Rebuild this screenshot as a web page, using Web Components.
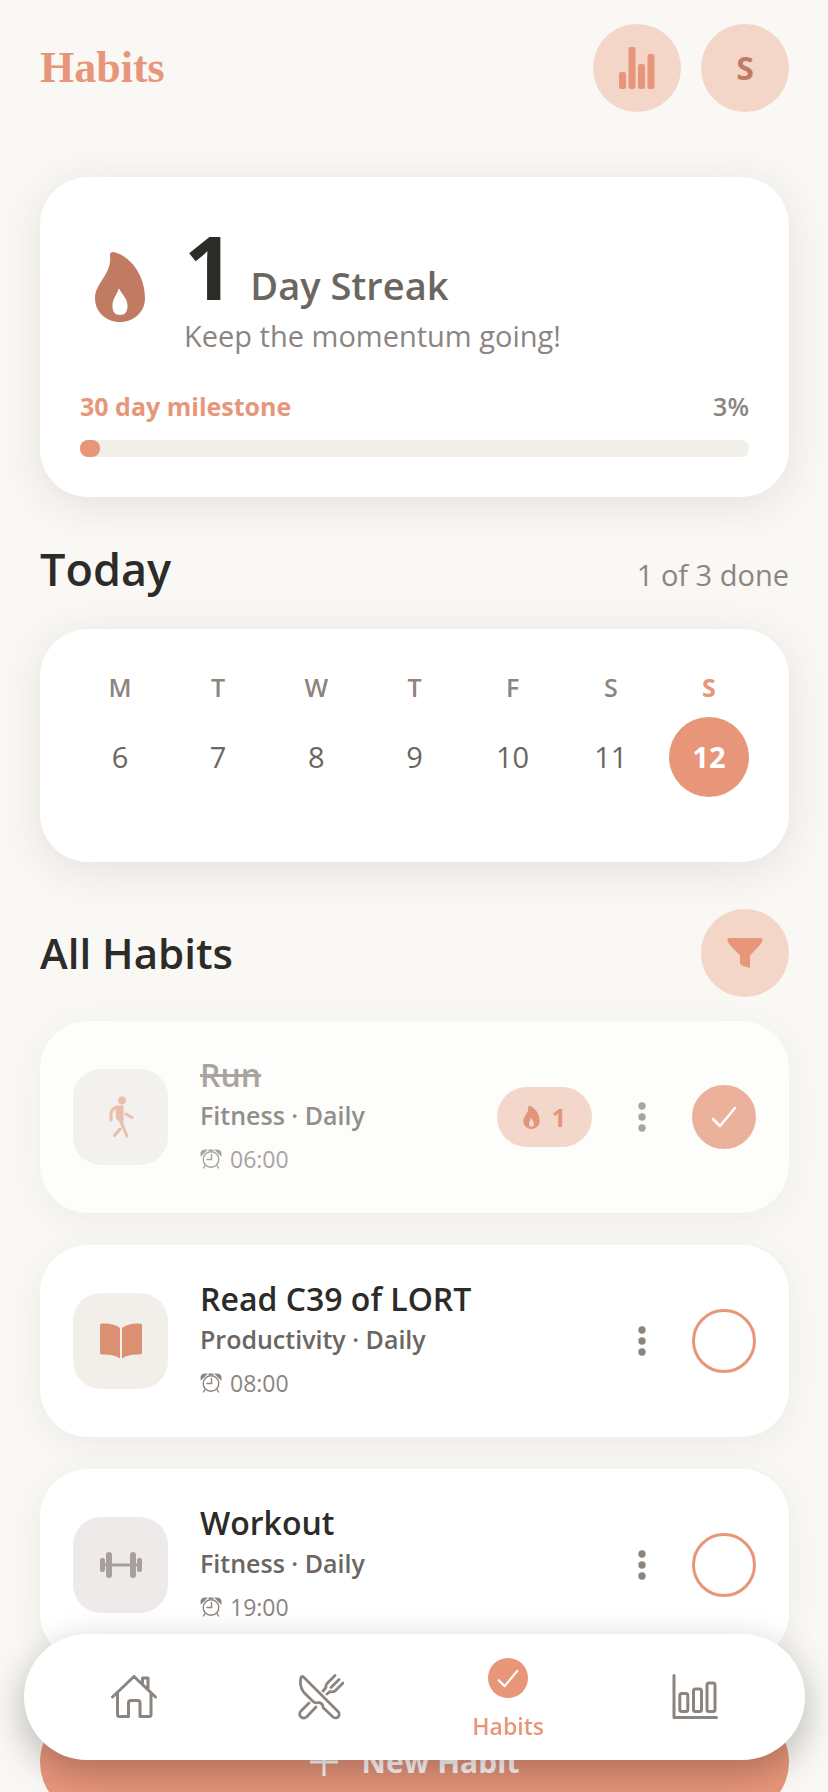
<!DOCTYPE html>
<html lang="en">
<head>
<meta charset="utf-8">
<meta name="viewport" content="width=device-width, initial-scale=1">
<title>Habits</title>
<style>
	:root {
		--bg: #f9f8f4;
		--accent: #e8967a;
		--accent-dark: #c17b62;
		--accent-soft: #f4d6c9;
		--ink: #2c2b27;
		--ink-2: #6b665f;
		--ink-3: #8c857f;
		--track: #f2efeb;
	}

	body {
		margin: 0;
		background: var(--bg);
		color: var(--ink);
		font-family: "Open Sans", "Noto Sans", sans-serif;
	}
</style>
</head>
<body>
<habits-app></habits-app>

<script>
// Inline drawings shared by all components
const ICONS = {
	bars: `<svg width="36" height="42" viewBox="0 0 36 42" fill="currentColor"><rect y="25" width="7" height="17" rx="2"/><rect x="9.5" width="7" height="42" rx="2"/><rect x="19" y="17" width="7" height="25" rx="2"/><rect x="28.5" y="7" width="7" height="35" rx="2"/></svg>`,
	flame: `<svg viewBox="0 0 50 70" fill="currentColor" fill-rule="evenodd"><path d="M18 0C34 3 50 22 50 46C50 60 39 70 25 70C11 70 0 60 0 46C0 31 17 22 15 4Q14.500 0 18 0ZM23.500 37C22 43 17.500 46 17.500 54C17.500 60 20 63 25 63C30 63 32.500 60 32.500 54C32.500 46 27 43 24.500 37Z"/></svg>`,
	filter: `<svg width="36" height="32" viewBox="0 0 36 32" fill="currentColor"><path d="M2 1H34Q36 1 35.500 3.500Q35 6 32 9L23 18.500V31L18 29.500Q13 28 13 26V18.500L4 9Q1 6 .5 3.500Q0 1 2 1Z"/></svg>`,
	walk: `<svg width="26" height="42" viewBox="0 0 26 42" fill="currentColor" stroke="currentColor" stroke-width="3" stroke-linecap="round" stroke-linejoin="round"><circle cx="14" cy="4.500" r="4" stroke="none"/><path d="M9 11H14V26L9.500 22Z"/><path d="M9 11Q3 13 3 18V24M18 18L24 21.500M13 26L19 40M12 33L6.500 39.500" fill="none"/></svg>`,
	book: `<svg width="42" height="36" viewBox="0 0 42 36" fill="currentColor"><path d="M2 .5Q14 0 20 5V35.500Q14 31 2 31.500Q0 31.500 0 29.500V2.500Q0 .5 2 .5ZM40 .5Q28 0 22 5V35.500Q28 31 40 31.500Q42 31.500 42 29.500V2.500Q42 .5 40 .5Z"/></svg>`,
	dumbbell: `<svg width="42" height="26" viewBox="0 0 42 26" fill="currentColor"><rect y="6" width="5" height="14" rx="2"/><rect x="6" width="6" height="26" rx="3"/><rect x="4" y="11.500" width="34" height="3"/><rect x="30" width="6" height="26" rx="3"/><rect x="37" y="6" width="5" height="14" rx="2"/></svg>`,
	clock: `<svg width="22" height="20" viewBox="0 0 22 20" fill="none" stroke="currentColor" stroke-width="1.400" stroke-linecap="round"><circle cx="11" cy="10.500" r="7.800"/><path d="M11.500 5.500V10.500H7M5 16.500L3.500 19M17 16.500L18.500 19M9 1.300H13"/><path d="M1.500 5.500Q1 1.500 5.500 1.500ZM20.500 5.500Q21 1.500 16.500 1.500Z" stroke-width="2"/></svg>`,
	dots: `<svg width="8" height="30" viewBox="0 0 8 30" fill="currentColor"><circle cx="4" cy="4" r="3.700"/><circle cx="4" cy="15" r="3.700"/><circle cx="4" cy="26" r="3.700"/></svg>`,
	check: `<svg width="26" height="22" viewBox="0 0 26 22" fill="none" stroke="currentColor" stroke-width="2.600" stroke-linecap="round" stroke-linejoin="round"><path d="M2 13L9 20L24 2"/></svg>`,
	plus: `<svg width="28" height="28" viewBox="0 0 28 28" fill="none" stroke="currentColor" stroke-width="3"><path d="M14 0V28M0 14H28"/></svg>`,
	home: `<svg width="46" height="44" viewBox="0 0 46 44" fill="none" stroke="currentColor" stroke-width="3" stroke-linecap="round" stroke-linejoin="round"><path d="M1.500 22L23 1.500L44.500 22M6.500 18.500V39.500Q6.500 41.500 8.500 41.500H17.500V28Q17.500 25.500 20 25.500H26.500Q29 25.500 29 28V41.500H38Q40 41.500 40 39.500V18.500M31.500 8.500V3H37V14"/></svg>`,
	meals: `<svg width="46" height="46" viewBox="0 0 46 46" fill="none" stroke="currentColor" stroke-width="2.800" stroke-linecap="round" stroke-linejoin="round"><path d="M3 3.500Q4 1.500 6 3.500L40 37.500A3.600 3.600 0 0 1 35 43L25 33.500Q25 29 20.500 28.500Q17 29.500 14.500 27L6 18.500Q1 12 3 3.500Z"/><path d="M11 29L3 37A4 4 0 0 0 8.500 43L18 33M37 1.500L29 9.500Q27.500 11.500 28 13.500L25 17M45 9L37 17Q34.500 18.500 32 17.500L29 20M41 5.500L33 13.500"/></svg>`,
	stats: `<svg width="46" height="46" viewBox="0 0 46 46" fill="none" stroke="currentColor" stroke-width="3" stroke-linecap="round" stroke-linejoin="round"><path d="M2 1.500V43.500H44.500"/><rect x="7.800" y="19.500" width="8" height="18" rx="2"/><rect x="21.500" y="15" width="8" height="22.500" rx="2"/><rect x="35" y="9" width="8" height="28.500" rx="2"/></svg>`
};

// Small helper: attach an open root and fill it
function render(host, css, html) {
	const root = host.attachShadow({ mode: 'open' });
	root.innerHTML = `<style>* { box-sizing: border-box; margin: 0; } svg { display: block; flex: none; } ${css}</style>${html}`;
	return root;
}

// Round button, content goes in the slot or comes from the icon attribute
class RoundButton extends HTMLElement {
	connectedCallback() {
		const icon = this.getAttribute('icon');
		render(this, `
			:host { display: block; }
			button {
				display: grid;
				place-items: center;
				width: 88px;
				height: 88px;
				padding: 0;
				border: 0;
				border-radius: 50%;
				background: var(--accent-soft);
				color: var(--button-color, var(--accent));
				font: 700 32px/40px "Open Sans", "Noto Sans", sans-serif;
			}
		`, `<button type="button" aria-label="${this.getAttribute('label')}">${icon ? ICONS[icon] : '<slot></slot>'}</button>`);
	}
}
customElements.define('round-button', RoundButton);

// White rounded surface
class SurfaceCard extends HTMLElement {
	connectedCallback() {
		render(this, `
			:host {
				display: block;
				border-radius: 48px;
				background: #fff;
				box-shadow: 0 8px 40px rgba(110, 70, 80, 0.13);
			}
		`, `<slot></slot>`);
	}
}
customElements.define('surface-card', SurfaceCard);

class StreakCard extends HTMLElement {
	connectedCallback() {
		const percent = this.getAttribute('percent');
		render(this, `
			:host { display: block; }
			.body { padding: 40px; }
			.top { display: flex; align-items: center; gap: 24px; }
			.flame { display: grid; place-items: center; width: 80px; color: var(--accent-dark); }
			.flame svg { width: 50px; height: 70px; }
			.count { display: flex; align-items: baseline; gap: 16px; line-height: 98px; }
			.count strong { font-size: 88px; font-weight: 700; }
			.count span { font-size: 38px; line-height: 48px; font-weight: 600; color: var(--ink-2); }
			.note { font-size: 29px; line-height: 42px; color: var(--ink-3); }
			.goal {
				display: flex;
				justify-content: space-between;
				margin: 32px 0 17px;
				font-size: 25px;
				line-height: 34px;
				font-weight: 600;
				color: var(--ink-3);
			}
			.goal b { font-weight: 700; color: var(--accent); }
			.track { height: 17px; border-radius: 8px; background: var(--track); }
			.fill { width: ${percent}%; height: 17px; border-radius: 8px; background: var(--accent); }
		`, `
			<surface-card><div class="body">
				<div class="top">
					<div class="flame">${ICONS.flame}</div>
					<div>
						<p class="count"><strong>${this.getAttribute('days')}</strong><span>Day Streak</span></p>
						<p class="note">Keep the momentum going!</p>
					</div>
				</div>
				<div class="goal"><b>${this.getAttribute('goal')} day milestone</b><span>${percent}%</span></div>
				<div class="track" role="progressbar" aria-valuenow="${percent}" aria-label="Milestone"><div class="fill"></div></div>
			</div></surface-card>
		`);
	}
}
customElements.define('streak-card', StreakCard);

// Title on the left, anything slotted on the right
class SectionHeader extends HTMLElement {
	connectedCallback() {
		render(this, `
			:host { display: flex; justify-content: space-between; align-items: center; }
			:host([baseline]) { align-items: baseline; }
			h2 { font-size: var(--title-size, 42px); line-height: 64px; font-weight: 600; }
			slot { display: block; font-size: 29px; color: var(--ink-3); }
		`, `<h2>${this.getAttribute('title-text')}</h2><slot></slot>`);
	}
}
customElements.define('section-header', SectionHeader);

class WeekCalendar extends HTMLElement {
	connectedCallback() {
		const letters = ['M', 'T', 'W', 'T', 'F', 'S', 'S'];
		const first = Number(this.getAttribute('first'));
		const today = Number(this.getAttribute('today'));
		const days = letters.map((letter, i) => `
			<li class="${first + i === today ? 'today' : ''}"><span>${letter}</span><b>${first + i}</b></li>`).join('');
		render(this, `
			:host { display: block; }
			ol { display: flex; justify-content: space-between; padding: 40px 40px 65px; list-style: none; }
			li { display: grid; gap: 12px; width: 80px; text-align: center; }
			span { font-size: 25px; line-height: 36px; font-weight: 600; color: var(--ink-3); }
			b { border-radius: 50%; font-size: 29px; line-height: 80px; font-weight: 400; color: var(--ink-2); }
			.today span { font-weight: 700; color: var(--accent); }
			.today b { font-weight: 700; color: #fff; background: var(--accent); }
		`, `<surface-card><ol>${days}</ol></surface-card>`);
	}
}
customElements.define('week-calendar', WeekCalendar);

class HabitCard extends HTMLElement {
	connectedCallback() {
		const name = this.getAttribute('name');
		const streak = this.getAttribute('streak');
		const done = this.hasAttribute('done');
		render(this, `
			:host {
				display: flex;
				align-items: center;
				padding: 32px 33px 36px;
				border-radius: 48px;
				background: #fff;
				box-shadow: 0 6px 32px rgba(90, 75, 60, 0.08);
			}
			:host([done]) { opacity: 0.72; }
			.icon {
				display: grid;
				place-items: center;
				flex: none;
				width: 95px;
				height: 96px;
				margin-top: 4px;
				border-radius: 28px;
				background: var(--track);
				color: #dc9072;
			}
			:host([done]) .icon { color: #e5a893; }
			:host([tone="grey"]) .icon { background: #eeeae9; color: #a89f9d; }
			.text { flex: 1; padding-left: 32px; }
			h3 { font-size: 32px; line-height: 44px; font-weight: 600; }
			:host([done]) h3 { color: var(--ink-3); text-decoration: line-through; }
			.kind { font-size: 25px; line-height: 36px; font-weight: 600; color: var(--ink-2); }
			.time { display: flex; align-items: center; gap: 8px; margin-top: 8px; font-size: 23px; line-height: 36px; color: var(--ink-3); }
			.actions { display: flex; align-items: center; gap: 24px; margin-top: 4px; }
			.streak {
				display: flex;
				align-items: center;
				justify-content: center;
				gap: 12px;
				width: 95px;
				height: 60px;
				border-radius: 30px;
				background: #f0cbbb;
				color: #d9714f;
				font-size: 25px;
				font-weight: 700;
			}
			.streak svg { width: 17px; height: 23px; }
			button { display: grid; place-items: center; width: 52px; height: 64px; padding: 0; border: 0; background: none; color: var(--ink-3); }
			label { display: grid; place-items: center; width: 64px; height: 64px; color: #fff; }
			label > * { grid-area: 1 / 1; }
			input { appearance: none; width: 64px; height: 64px; border: 3px solid var(--accent); border-radius: 50%; }
			input:checked { background: var(--accent); }
			label svg { z-index: 1; }
			input:not(:checked) + svg { visibility: hidden; }
		`, `
			<div class="icon">${ICONS[this.getAttribute('icon')]}</div>
			<div class="text">
				<h3>${name}</h3>
				<p class="kind">${this.getAttribute('kind')} · Daily</p>
				<p class="time">${ICONS.clock}<span>${this.getAttribute('time')}</span></p>
			</div>
			<div class="actions">
				${streak ? `<div class="streak">${ICONS.flame}<span>${streak}</span></div>` : ''}
				<button type="button" aria-label="More options">${ICONS.dots}</button>
				<label><input type="checkbox" aria-label="${name} done" ${done ? 'checked' : ''}>${ICONS.check}</label>
			</div>
		`);
	}
}
customElements.define('habit-card', HabitCard);

// Floating tab bar, lies over the scrolled page
class TabBar extends HTMLElement {
	connectedCallback() {
		render(this, `
			:host { display: block; }
			nav {
				display: flex;
				height: 126px;
				padding: 0 16px;
				border-radius: 63px;
				background: #fff;
				box-shadow: 0 12px 36px rgba(20, 10, 15, 0.28);
			}
			a {
				flex: 1;
				display: flex;
				flex-direction: column;
				align-items: center;
				justify-content: center;
				gap: 12px;
				color: var(--ink-3);
				text-decoration: none;
				font-size: 23px;
				line-height: 32px;
				font-weight: 600;
			}
			.active { padding-top: 6px; color: var(--accent); }
			.disc { display: grid; place-items: center; width: 40px; height: 40px; border-radius: 50%; background: var(--accent); color: #fff; }
			.disc svg { width: 22px; height: 19px; }
		`, `
			<nav>
				<a href="#home" aria-label="Home">${ICONS.home}</a>
				<a href="#meals" aria-label="Meals">${ICONS.meals}</a>
				<a href="#habits" class="active" aria-current="page"><span class="disc">${ICONS.check}</span>Habits</a>
				<a href="#stats" aria-label="Stats">${ICONS.stats}</a>
			</nav>
		`);
	}
}
customElements.define('tab-bar', TabBar);

class HabitsApp extends HTMLElement {
	connectedCallback() {
		render(this, `
			:host { display: block; height: 100vh; overflow: hidden; }
			main { height: 100%; padding: 24px 39px 180px 40px; overflow-y: auto; scrollbar-width: none; }
			header { display: flex; align-items: center; gap: 20px; margin-bottom: 65px; }
			h1 { flex: 1; font: 700 44px/56px "Liberation Serif", serif; color: var(--accent); }
			.user { --button-color: var(--accent-dark); }
			.today { --title-size: 45px; margin: 40px 0 28px; }
			.all { margin: 47px 0 24px; }
			.list { display: grid; gap: 32px; }
			.new {
				display: flex;
				align-items: center;
				justify-content: center;
				gap: 24px;
				width: 100%;
				height: 108px;
				margin-top: 47px;
				border: 0;
				border-radius: 54px;
				background: var(--accent);
				color: #fff;
				font: 700 30px/40px "Open Sans", "Noto Sans", sans-serif;
			}
			tab-bar { position: fixed; left: 24px; right: 23px; bottom: 32px; }
		`, `
			<main>
				<header>
					<h1>Habits</h1>
					<round-button icon="bars" label="Statistics"></round-button>
					<round-button class="user" label="Account S">S</round-button>
				</header>
				<streak-card days="1" goal="30" percent="3"></streak-card>
				<section-header class="today" baseline title-text="Today">1 of 3 done</section-header>
				<week-calendar first="6" today="12"></week-calendar>
				<section-header class="all" title-text="All Habits"><round-button icon="filter" label="Filter"></round-button></section-header>
				<div class="list">
					<habit-card done icon="walk" name="Run" kind="Fitness" time="06:00" streak="1"></habit-card>
					<habit-card icon="book" name="Read C39 of LORT" kind="Productivity" time="08:00"></habit-card>
					<habit-card tone="grey" icon="dumbbell" name="Workout" kind="Fitness" time="19:00"></habit-card>
				</div>
				<button type="button" class="new">${ICONS.plus}<span>New Habit</span></button>
			</main>
			<tab-bar></tab-bar>
		`);
	}
}
customElements.define('habits-app', HabitsApp);
</script>
</body>
</html>
